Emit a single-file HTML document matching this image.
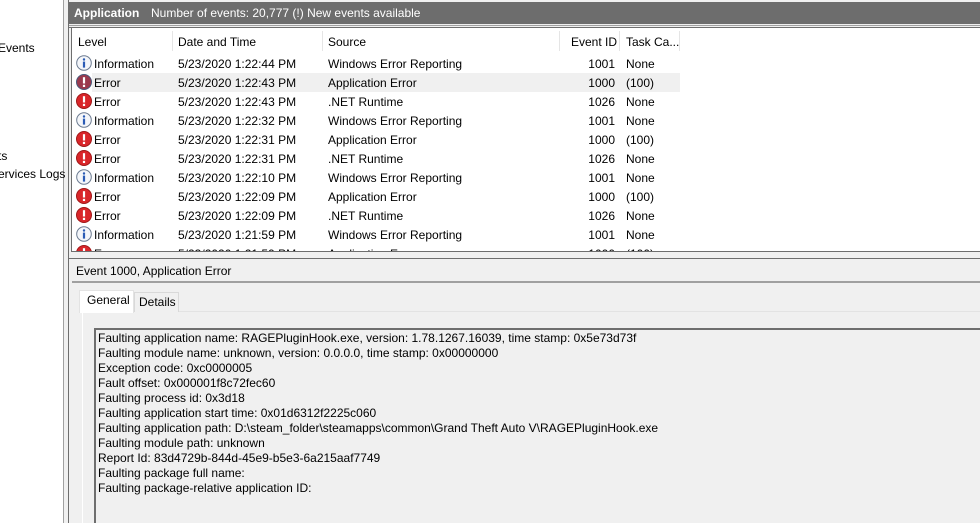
<!DOCTYPE html>
<html><head><style>
*{margin:0;padding:0;box-sizing:border-box}
body{width:980px;height:523px;overflow:hidden;background:#f0f0f0;font-family:"Liberation Sans",sans-serif;font-size:12px;color:#000;position:relative}
.abs{position:absolute}
.t{position:absolute;white-space:nowrap;line-height:15px}
.ic{position:absolute;width:16px;height:16px}
</style></head><body>
<div class="abs" style="left:0;top:0;width:63px;height:523px;background:#fff"></div>
<div class="abs" style="left:63px;top:0;width:1px;height:523px;background:#a0a0a0"></div>
<div class="abs" style="left:68px;top:0;width:1px;height:523px;background:#6e6e6e"></div>
<div class="t" style="left:-2px;top:41px">Events</div>
<div class="t" style="left:-2px;top:149px">ts</div>
<div class="t" style="left:-2px;top:167px">ervices Logs</div>
<div class="abs" style="left:69px;top:2px;width:911px;height:22px;background:#6d6d6d"></div>
<div class="t" style="left:74px;top:6px;color:#fff;font-weight:bold">Application</div>
<div class="t" style="left:151px;top:6px;color:#fff">Number of events: 20,777 (!) New events available</div>
<div class="abs" style="left:69px;top:25px;width:911px;height:1px;background:#a0a0a0"></div>
<div class="abs" style="left:69px;top:27px;width:911px;height:1px;background:#6e6e6e"></div>
<div class="abs" style="left:71px;top:28px;width:909px;height:224px;background:#fff;border-left:1px solid #6e6e6e;border-bottom:1px solid #6e6e6e"></div>
<div class="abs" style="left:172px;top:31px;width:1px;height:20px;background:#e5e5e5"></div>
<div class="abs" style="left:322px;top:31px;width:1px;height:20px;background:#e5e5e5"></div>
<div class="abs" style="left:559px;top:31px;width:1px;height:20px;background:#e5e5e5"></div>
<div class="abs" style="left:619px;top:31px;width:1px;height:20px;background:#e5e5e5"></div>
<div class="abs" style="left:679px;top:31px;width:1px;height:20px;background:#e5e5e5"></div>
<div class="t" style="left:78px;top:35px">Level</div>
<div class="t" style="left:178px;top:35px">Date and Time</div>
<div class="t" style="left:328px;top:35px">Source</div>
<div class="t" style="left:571px;top:35px">Event ID</div>
<div class="t" style="left:626px;top:35px">Task Ca...</div>
<div class="abs" style="left:92px;top:73px;width:588px;height:19px;background:#f0f0f0"></div>
<div id="rows" class="abs" style="left:0;top:0;width:980px;height:251px;overflow:hidden"></div>
<div class="abs" style="left:69px;top:258px;width:911px;height:1px;background:#6e6e6e"></div>
<div class="t" style="left:76px;top:264px">Event 1000, Application Error</div>
<div class="abs" style="left:72px;top:281px;width:908px;height:2px;background:#a0a0a0"></div>
<div class="abs" style="left:82px;top:311px;width:898px;height:212px;background:#f0f0f0;border-left:1px solid #fff;border-top:1px solid #e3e3e3"></div>
<div class="abs" style="left:79px;top:290px;width:55px;height:23px;background:#fff;border:1px solid #e3e3e3;border-bottom:none"></div>
<div class="t" style="left:87px;top:293px">General</div>
<div class="abs" style="left:134px;top:292px;width:45px;height:20px;background:#f0f0f0;border:1px solid #d9d9d9;border-bottom:none"></div>
<div class="t" style="left:139px;top:295px">Details</div>
<div class="abs" style="left:94px;top:328px;width:886px;height:195px;border-left:2px solid #6e6e6e;border-top:2px solid #6e6e6e;background:#f0f0f0"></div>
<div class="t" style="left:98px;top:331px;line-height:15px">Faulting application name: RAGEPluginHook.exe, version: 1.78.1267.16039, time stamp: 0x5e73d73f<br>Faulting module name: unknown, version: 0.0.0.0, time stamp: 0x00000000<br>Exception code: 0xc0000005<br>Fault offset: 0x000001f8c72fec60<br>Faulting process id: 0x3d18<br>Faulting application start time: 0x01d6312f2225c060<br>Faulting application path: D:\steam_folder\steamapps\common\Grand Theft Auto V\RAGEPluginHook.exe<br>Faulting module path: unknown<br>Report Id: 83d4729b-844d-45e9-b5e3-6a215aaf7749<br>Faulting package full name:<br>Faulting package-relative application ID:</div>
<script>
var info='<svg class="ic" viewBox="0 0 16 16" style="left:76px;top:TOPpx"><circle cx="8" cy="8" r="7.3" fill="#f4f6fa" stroke="#6b7a90"/><circle cx="8" cy="4.5" r="1.2" fill="#2a5bb5"/><rect x="6.9" y="6.6" width="2.2" height="6" fill="#2a5bb5"/></svg>';
var err='<svg class="ic" viewBox="0 0 16 16" style="left:76px;top:TOPpx"><circle cx="8" cy="8" r="7.5" fill="COL" stroke="STK"/><rect x="6.9" y="3.2" width="2.2" height="6.3" fill="#fff"/><rect x="6.9" y="10.8" width="2.2" height="2.2" fill="#fff"/></svg>';
var d=[["i","1:22:44","Windows Error Reporting","1001","None"],["s","1:22:43","Application Error","1000","(100)"],["e","1:22:43",".NET Runtime","1026","None"],["i","1:22:32","Windows Error Reporting","1001","None"],["e","1:22:31","Application Error","1000","(100)"],["e","1:22:31",".NET Runtime","1026","None"],["i","1:22:10","Windows Error Reporting","1001","None"],["e","1:22:09","Application Error","1000","(100)"],["e","1:22:09",".NET Runtime","1026","None"],["i","1:21:59","Windows Error Reporting","1001","None"],["e","1:21:59","Application Error","1000","(100)"]];
var h='';
d.forEach(function(r,i){var y=57+i*19;
var ic=r[0]=="i"?info:err.replace("COL",r[0]=="s"?"#9a3a4e":"#d9262a").replace("STK",r[0]=="s"?"#4a5a7a":"#a01818");
h+=ic.replace("TOP",y-2);
h+='<div class="t" style="left:94px;top:'+y+'px">'+(r[0]=="i"?"Information":"Error")+'</div>';
h+='<div class="t" style="left:178px;top:'+y+'px">5/23/2020 '+r[1]+' PM</div>';
h+='<div class="t" style="left:328px;top:'+y+'px">'+r[2]+'</div>';
h+='<div class="t" style="left:560px;width:55px;text-align:right;top:'+y+'px">'+r[3]+'</div>';
h+='<div class="t" style="left:626px;top:'+y+'px">'+r[4]+'</div>';});
document.getElementById('rows').innerHTML=h;
</script>
</body></html>
